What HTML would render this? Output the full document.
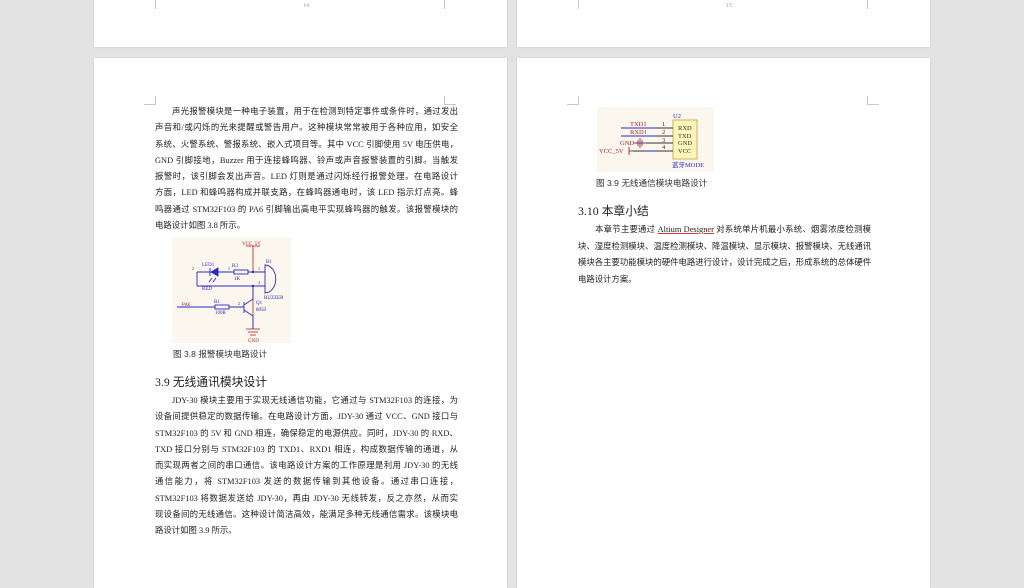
<!DOCTYPE html>
<html><head><meta charset="utf-8"><style>
body{margin:0;width:1024px;height:575px;background:#e3e3e3;position:relative;overflow:hidden;font-family:"Liberation Serif","Noto Sans CJK SC",serif;color:#222}
.pg{position:absolute;background:#fff;box-shadow:0 0 2px rgba(0,0,0,.12)}
.c{position:absolute;border-color:#c8c8c8;border-style:solid;width:11px;height:8px}
.t{position:absolute;font-size:8.4px;line-height:16.3px;width:303px}
.t div{text-align:justify;text-align-last:justify;white-space:nowrap}
.t div.e{text-align-last:left}
.t div.i{padding-left:17px}
.cap{position:absolute;font-size:8.6px;font-family:"Liberation Sans","Noto Sans CJK SC",sans-serif;color:#333}
.h{position:absolute;font-size:11.8px;font-family:"Liberation Serif","Noto Sans CJK SC",sans-serif;color:#222}
.n{position:absolute;font-size:6px;color:#999}
</style></head><body>
<div class="pg" style="left:94px;top:0;width:413px;height:47px"></div>
<div class="pg" style="left:517px;top:0;width:413px;height:47px"></div>
<div class="pg" style="left:94px;top:58px;width:413px;height:530px"></div>
<div class="pg" style="left:517px;top:58px;width:413px;height:530px"></div>
<div class="n" style="left:303px;top:3px">14</div>
<div class="n" style="left:726px;top:3px">15</div>
<div class="c" style="left:144px;top:0;border-width:0 1px 0 0;height:9px"></div>
<div class="c" style="left:444px;top:0;border-width:0 0 0 1px;height:9px"></div>
<div class="c" style="left:567px;top:0;border-width:0 1px 0 0;height:9px"></div>
<div class="c" style="left:867px;top:0;border-width:0 0 0 1px;height:9px"></div>
<div class="c" style="left:144px;top:96px;border-width:0 1px 1px 0"></div>
<div class="c" style="left:444px;top:96px;border-width:0 0 1px 1px"></div>
<div class="c" style="left:567px;top:96px;border-width:0 1px 1px 0"></div>
<div class="c" style="left:867px;top:96px;border-width:0 0 1px 1px"></div>

<div class="t" style="left:155px;top:104px">
<div class="i">声光报警模块是一种电子装置，用于在检测到特定事件或条件时，通过发出</div>
<div>声音和/或闪烁的光来提醒或警告用户。这种模块常常被用于各种应用，如安全</div>
<div>系统、火警系统、警报系统、嵌入式项目等。其中 VCC 引脚使用 5V 电压供电，</div>
<div>GND 引脚接地，Buzzer 用于连接蜂鸣器、铃声或声音报警装置的引脚。当触发</div>
<div>报警时，该引脚会发出声音。LED 灯则是通过闪烁经行报警处理。在电路设计</div>
<div>方面，LED 和蜂鸣器构成并联支路，在蜂鸣器通电时，该 LED 指示灯点亮。蜂</div>
<div>鸣器通过 STM32F103 的 PA6 引脚输出高电平实现蜂鸣器的触发。该报警模块的</div>
<div class="e">电路设计如图 3.8 所示。</div>
</div>

<svg style="position:absolute;left:172px;top:237px" width="119" height="106" font-family="Liberation Serif" font-size="5">
<rect width="119" height="106" fill="#fbf6ee"/>
<g stroke="#a8261c" fill="none" stroke-width=".8"><line x1="81" y1="9" x2="81" y2="35"/><line x1="74" y1="9" x2="88" y2="9"/><line x1="81" y1="49" x2="81" y2="92"/><line x1="74" y1="92" x2="88" y2="92"/><line x1="76" y1="95" x2="86" y2="95"/><line x1="78" y1="98" x2="84" y2="98"/></g>
<g stroke="#2b2bc0" fill="none" stroke-width=".9">
<line x1="25" y1="35" x2="93" y2="35"/><line x1="25" y1="49" x2="93" y2="49"/><line x1="25" y1="35" x2="25" y2="49"/>
<rect x="62" y="33" width="14" height="4" fill="#fbf6ee"/>
<path d="M93 28 A10 13 0 0 1 93 56 Z" fill="#fbf6ee"/>
<line x1="5" y1="70" x2="72" y2="70"/><rect x="43" y="68" width="14" height="4" fill="#fbf6ee"/>
<line x1="72" y1="65" x2="72" y2="76"/><line x1="72" y1="68" x2="81" y2="62"/><line x1="72" y1="73" x2="81" y2="79"/>
<line x1="81" y1="62" x2="81" y2="50"/><line x1="81" y1="79" x2="81" y2="92"/>
<path d="M39 35 L46 31 L46 39 Z" fill="#2b2bc0"/><line x1="38" y1="31" x2="38" y2="39"/>
<line x1="40" y1="41" x2="37" y2="45"/><line x1="44" y1="41" x2="41" y2="45"/>
</g>
<circle cx="81" cy="35" r="1.2" fill="#2b2bc0"/><circle cx="81" cy="49" r="1.2" fill="#2b2bc0"/>
<g fill="#a8261c"><text x="70" y="8">VCC_5V</text><text x="10" y="69">PA6</text><text x="76" y="105">GND</text></g>
<g fill="#2b2bc0"><text x="30" y="29">LED1</text><text x="60" y="30">R3</text><text x="62" y="43">1K</text><text x="94" y="26">B1</text><text x="92" y="62">BUZZER</text><text x="30" y="53">RED</text><text x="42" y="66">R1</text><text x="43" y="77">100R</text><text x="84" y="67">Q1</text><text x="84" y="74">8050</text></g>
<g fill="#333" font-size="4"><text x="20" y="33">2</text><text x="56" y="33">1</text><text x="86" y="33">1</text><text x="86" y="47">2</text><text x="66" y="68">2</text></g>
</svg>
<div class="cap" style="left:173px;top:348px">图 3.8  报警模块电路设计</div>
<div class="h" style="left:155px;top:373px">3.9 无线通讯模块设计</div>
<div class="t" style="left:155px;top:393px">
<div class="i">JDY-30 模块主要用于实现无线通信功能，它通过与 STM32F103 的连接，为</div>
<div>设备间提供稳定的数据传输。在电路设计方面，JDY-30 通过 VCC、GND 接口与</div>
<div>STM32F103 的 5V 和 GND 相连，确保稳定的电源供应。同时，JDY-30 的 RXD、</div>
<div>TXD 接口分别与 STM32F103 的 TXD1、RXD1 相连，构成数据传输的通道，从</div>
<div>而实现两者之间的串口通信。该电路设计方案的工作原理是利用 JDY-30 的无线</div>
<div>通信能力，将 STM32F103 发送的数据传输到其他设备。通过串口连接，</div>
<div>STM32F103 将数据发送给 JDY-30，再由 JDY-30 无线转发，反之亦然，从而实</div>
<div>现设备间的无线通信。这种设计简洁高效，能满足多种无线通信需求。该模块电</div>
<div class="e">路设计如图 3.9 所示。</div>
</div>

<svg style="position:absolute;left:596px;top:105px" width="122" height="68" font-family="Liberation Serif" font-size="6.5">
<rect x="1" y="2" width="117" height="65" fill="#fbf6ee"/>
<rect x="77" y="15" width="24" height="39" fill="#fdf6b8" stroke="#c8a040" stroke-width=".8"/>
<g stroke-width=".9"><line x1="25" y1="23" x2="60" y2="23" stroke="#2b2bc0"/><line x1="25" y1="31" x2="60" y2="31" stroke="#2b2bc0"/>
<line x1="60" y1="23" x2="77" y2="23" stroke="#333"/><line x1="60" y1="31" x2="77" y2="31" stroke="#333"/><line x1="50" y1="38" x2="77" y2="38" stroke="#333"/><line x1="37" y1="46" x2="77" y2="46" stroke="#333"/>
<line x1="38" y1="38" x2="50" y2="38" stroke="#2b2bc0"/><line x1="50" y1="46" x2="60" y2="46" stroke="#2b2bc0"/>
<g stroke="#a8261c"><line x1="44" y1="33" x2="44" y2="43"/><line x1="46" y1="35" x2="46" y2="41"/><line x1="42" y1="35" x2="42" y2="41"/><line x1="33" y1="42" x2="33" y2="50"/><line x1="33" y1="46" x2="37" y2="46"/></g></g>
<g fill="#a8261c"><text x="34" y="21">TXD1</text><text x="34" y="29">RXD1</text><text x="24" y="40">GND</text><text x="3" y="48">VCC_5V</text></g>
<g fill="#333"><text x="66" y="21">1</text><text x="66" y="29">2</text><text x="66" y="37">3</text><text x="66" y="44">4</text><text x="82" y="25">RXD</text><text x="82" y="33">TXD</text><text x="82" y="40">GND</text><text x="82" y="48">VCC</text></g>
<g fill="#2b2bc0"><text x="77" y="13">U2</text><text x="76" y="62">蓝牙MODE</text></g>
</svg>
<div class="cap" style="left:596px;top:177px">图 3.9  无线通信模块电路设计</div>
<div class="h" style="left:578px;top:202px">3.10  本章小结</div>
<div class="t" style="left:578px;top:222px;width:293px;line-height:16.5px">
<div class="i">本章节主要通过 <span style="text-decoration:underline;text-decoration-color:#d33">Altium Designer</span> 对系统单片机最小系统、烟雾浓度检测模</div>
<div>块、湿度检测模块、温度检测模块、降温模块、显示模块、报警模块、无线通讯</div>
<div>模块各主要功能模块的硬件电路进行设计，设计完成之后，形成系统的总体硬件</div>
<div class="e">电路设计方案。</div>
</div>
</body></html>
